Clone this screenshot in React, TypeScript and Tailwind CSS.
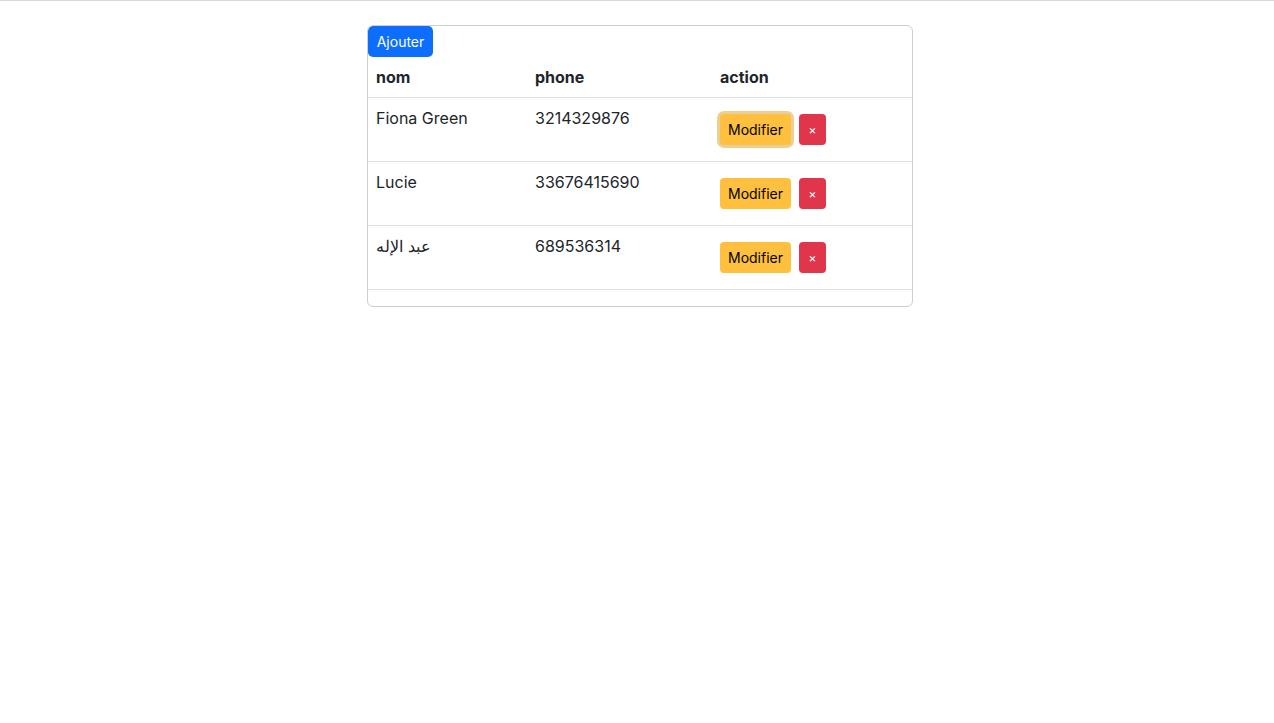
export default function App() {
  const rows = [
    { nom: "Fiona Green", phone: "3214329876", focus: true },
    { nom: "Lucie", phone: "33676415690", focus: false },
    { nom: "عبد الإله", phone: "689536314", focus: false },
  ];

  return (
    <div className="min-h-screen border-t border-[#d9d9d9] bg-white pt-6 text-[#212529] font-['Inter','Noto_Sans',sans-serif]">
      <div className="flex justify-center pl-[6px]">
        <div className="w-[546px] overflow-hidden rounded-md border border-[#cfcfcf] pb-4">
          <button
            type="button"
            className="block h-[31px] w-[65px] rounded-[5px] bg-[#0d6efd] text-sm text-white"
          >
            Ajouter
          </button>
          <table className="w-full border-collapse text-base">
            <thead>
              <tr className="border-b border-[#dee2e6]">
                <th className="w-[159px] p-2 text-left font-bold">nom</th>
                <th className="w-[185px] p-2 text-left font-bold">phone</th>
                <th className="p-2 text-left font-bold">action</th>
              </tr>
            </thead>
            <tbody>
              {rows.map((r) => (
                <tr key={r.phone} className="h-16 border-b border-[#dee2e6] align-top">
                  <td className="p-2">{r.nom}</td>
                  <td className="p-2">{r.phone}</td>
                  <td className="p-2">
                    <div className="mt-2 flex gap-2">
                      <button
                        type="button"
                        className={`h-[31px] w-[71px] rounded-[4px] bg-[#ffc03f] text-sm text-black ${
                          r.focus ? "ring-[3px] ring-[#ecd093]" : ""
                        }`}
                      >
                        Modifier
                      </button>
                      <button
                        type="button"
                        className="h-[31px] w-[27px] rounded-[4px] bg-[#e0354a] text-xs text-white"
                      >
                        ×
                      </button>
                    </div>
                  </td>
                </tr>
              ))}
            </tbody>
          </table>
        </div>
      </div>
    </div>
  );
}
